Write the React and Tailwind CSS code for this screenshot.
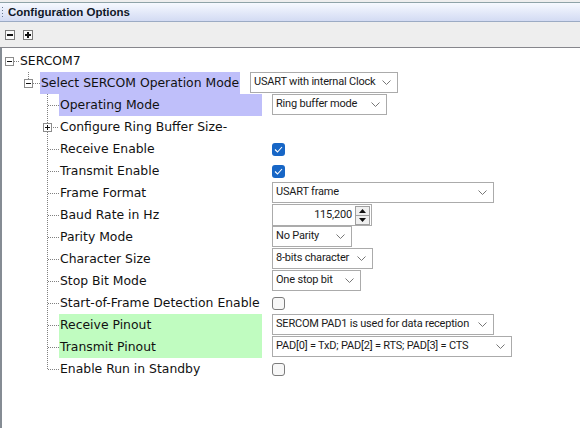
import React from 'react'

const labelFont = "font-['DejaVu_Sans',sans-serif] text-[12.4px] text-[#111]"
const ctrlFont = "font-['Roboto',sans-serif] text-[11px] tracking-[-0.2px] text-[#1a1a1a]"

const rows = [
  { label: 'Operating Mode', hl: 'blue', ctrl: { type: 'combo', text: 'Ring buffer mode', w: 'w-[115px]' } },
  { label: 'Configure Ring Buffer Size-', expander: true },
  { label: 'Receive Enable', ctrl: { type: 'check', on: true } },
  { label: 'Transmit Enable', ctrl: { type: 'check', on: true } },
  { label: 'Frame Format', ctrl: { type: 'combo', text: 'USART frame', w: 'w-[222px]' } },
  { label: 'Baud Rate in Hz', ctrl: { type: 'spin', text: '115,200' } },
  { label: 'Parity Mode', ctrl: { type: 'combo', text: 'No Parity', w: 'w-[80px]' } },
  { label: 'Character Size', ctrl: { type: 'combo', text: '8-bits character', w: 'w-[101px]' } },
  { label: 'Stop Bit Mode', ctrl: { type: 'combo', text: 'One stop bit', w: 'w-[89px]' } },
  { label: 'Start-of-Frame Detection Enable', ctrl: { type: 'check', on: false } },
  { label: 'Receive Pinout', hl: 'green', ctrl: { type: 'combo', text: 'SERCOM PAD1 is used for data reception', w: 'w-[222px]' } },
  { label: 'Transmit Pinout', hl: 'green', ctrl: { type: 'combo', text: 'PAD[0] = TxD; PAD[2] = RTS; PAD[3] = CTS', w: 'w-[240px]' } },
  { label: 'Enable Run in Standby', ctrl: { type: 'check', on: false } },
]

function Chevron() {
  return (
    <svg width="9" height="5" viewBox="0 0 9 5" className="shrink-0">
      <polyline points="0.5,0.5 4.5,4.5 8.5,0.5" fill="none" stroke="#777" strokeWidth="1" />
    </svg>
  )
}

function Combo({ text, w }) {
  return (
    <div className={`flex h-[21px] items-center justify-between self-start border border-[#ababab] bg-white pl-[3px] pr-[6px] ${w} ${ctrlFont}`}>
      <span className="whitespace-nowrap">{text}</span>
      <Chevron />
    </div>
  )
}

function Spin({ text }) {
  return (
    <div className={`flex h-[22px] w-[100px] items-center self-start border border-[#ababab] bg-white ${ctrlFont}`}>
      <span className="flex-1 pr-[3px] text-right">{text}</span>
      <div className="mr-[1px] flex h-[19px] w-[15px] flex-col">
        <div className="flex flex-1 items-center justify-center border border-[#a0a0a0] bg-[#f0f0f0]">
          <svg width="7" height="4" viewBox="0 0 7 4"><polygon points="0,4 3.5,0 7,4" fill="#111" /></svg>
        </div>
        <div className="flex flex-1 items-center justify-center border border-t-0 border-[#a0a0a0] bg-[#f0f0f0]">
          <svg width="7" height="4" viewBox="0 0 7 4"><polygon points="0,0 3.5,4 7,0" fill="#111" /></svg>
        </div>
      </div>
    </div>
  )
}

function Check({ on }) {
  if (on) {
    return (
      <div className="flex h-[13px] w-[13px] items-center justify-center rounded-[3px] bg-[#1766c6]">
        <svg width="9" height="7" viewBox="0 0 9 7">
          <polyline points="1,3.5 3.5,6 8,1" fill="none" stroke="#fff" strokeWidth="1.1" />
        </svg>
      </div>
    )
  }
  return <div className="h-[13px] w-[13px] rounded-[3px] border border-[#7c7c7c] bg-[#f7f7f7]" />
}

function Control({ ctrl }) {
  if (!ctrl) return null
  if (ctrl.type === 'combo') return <Combo text={ctrl.text} w={ctrl.w} />
  if (ctrl.type === 'spin') return <Spin text={ctrl.text} />
  return <Check on={ctrl.on} />
}

function Box({ x, minus }) {
  return (
    <g shapeRendering="crispEdges">
      <rect x={x + 0.5} y="7.5" width="8" height="8" fill="#fff" stroke="#8c8c8c" />
      <line x1={x + 2} y1="11.5" x2={x + 7} y2="11.5" stroke="#111" />
      {!minus && <line x1={x + 4.5} y1="9" x2={x + 4.5} y2="14" stroke="#111" />}
    </g>
  )
}

const dots = { stroke: '#808080', strokeDasharray: '1 1', shapeRendering: 'crispEdges' }

function ChildGutter({ expander, last }) {
  return (
    <svg width="59" height="22" className="shrink-0">
      <line x1="47.5" y1="0" x2="47.5" y2={last ? 12 : 22} {...dots} />
      <line x1={expander ? 53 : 48} y1="11.5" x2="59" y2="11.5" {...dots} />
      {expander && <Box x={43} />}
    </svg>
  )
}

export default function App() {
  return (
    <div className="flex h-[428px] w-[580px] flex-col bg-[#eeeeee]">
      {/* title bar */}
      <div className="mt-[2px] flex h-[20px] items-center border-t border-b border-t-[#8ea3a8] border-b-[#9cabc4] bg-gradient-to-b from-[#f6f9ff] to-[#d3dbf3]">
        <div className="ml-[2px] flex h-[11px] w-[2px] flex-col justify-between">
          <div className="h-[1px] w-[1px] bg-[#6a7a90]" />
          <div className="h-[1px] w-[1px] bg-[#6a7a90]" />
          <div className="h-[1px] w-[1px] bg-[#6a7a90]" />
          <div className="h-[1px] w-[1px] bg-[#6a7a90]" />
        </div>
        <span className="ml-[4px] mt-[2px] font-['Liberation_Sans',sans-serif] text-[11.5px] font-bold text-[#101828]">
          Configuration Options
        </span>
      </div>

      {/* toolbar */}
      <div className="flex h-[26px] items-center gap-[8px] border-b border-[#86868c] pl-[5px]">
        <div className="flex h-[10px] w-[10px] items-center justify-center border border-[#7a7a7a] bg-[#fafafa]">
          <div className="h-[2px] w-[6px] bg-[#111]" />
        </div>
        <div className="relative flex h-[10px] w-[10px] items-center justify-center border border-[#7a7a7a] bg-[#fafafa]">
          <div className="h-[2px] w-[6px] bg-[#111]" />
          <div className="absolute h-[6px] w-[2px] bg-[#111]" />
        </div>
      </div>

      {/* tree */}
      <div className="flex-1 border-l-2 border-[#858c94] bg-white pt-[2px]">
        <div className="flex h-[22px] items-center">
          <svg width="18" height="22" className="shrink-0">
            <Box x={3} minus />
            <line x1="12" y1="11.5" x2="18" y2="11.5" {...dots} />
          </svg>
          <span className={labelFont}>SERCOM7</span>
        </div>

        <div className="flex h-[22px] items-center">
          <svg width="38" height="22" className="shrink-0">
            <line x1="26.5" y1="0" x2="26.5" y2="7" {...dots} />
            <Box x={22} minus />
            <line x1="31" y1="11.5" x2="38" y2="11.5" {...dots} />
          </svg>
          <div className={`flex h-[22px] w-[200px] items-center bg-[#bfbffa] pl-[1px] ${labelFont}`}>
            Select SERCOM Operation Mode
          </div>
          <div className="ml-[10px] flex h-[22px] items-center">
            <Combo text="USART with internal Clock" w="w-[148px]" />
          </div>
        </div>

        {rows.map((r, i) => (
          <div key={r.label} className="flex h-[22px] items-center">
            <div className="-ml-[2px] flex">
              <ChildGutter expander={r.expander} last={i === rows.length - 1} />
            </div>
            <div
              className={`flex h-[22px] w-[203px] items-center pl-[1px] ${labelFont} ${
                r.hl === 'blue' ? 'bg-[#bfbffa]' : r.hl === 'green' ? 'bg-[#c0fcc0]' : ''
              }`}
            >
              {r.label}
            </div>
            <div className="ml-[10px] flex h-[22px] items-center">
              <Control ctrl={r.ctrl} />
            </div>
          </div>
        ))}
      </div>
    </div>
  )
}
